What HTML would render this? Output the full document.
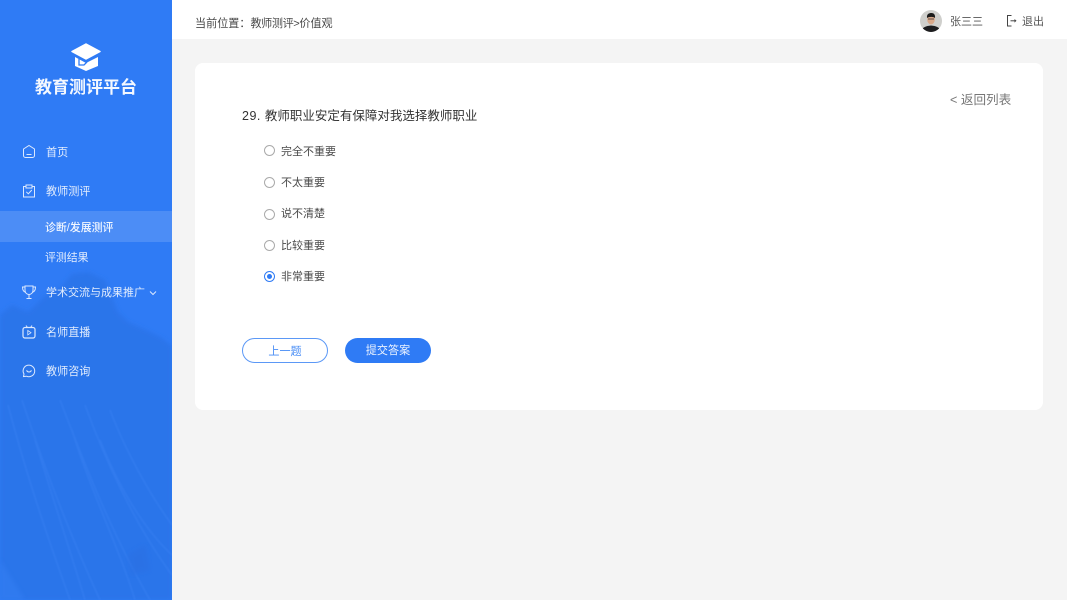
<!DOCTYPE html>
<html lang="zh"><head><meta charset="utf-8"><title>教育测评平台</title>
<style>
*{margin:0;padding:0;box-sizing:border-box}
html,body{width:1067px;height:600px;overflow:hidden;background:#f4f4f4;font-family:"Liberation Sans","Noto Sans CJK SC",sans-serif}
.a{position:absolute;white-space:nowrap;line-height:16px}
#side{position:absolute;left:0;top:0;width:172px;height:600px;background:#2f7bf5;overflow:hidden}
#side svg{position:absolute}
.m{color:#e3edfd;font-size:11.1px}
.o{color:#4a4a4a;font-size:11px;left:281px}
.r{position:absolute;left:264px;width:11px;height:11px;border:1px solid #aaa;border-radius:50%;background:#fff}
</style></head><body>
<div id="side">
<svg style="left:0;top:0" width="172" height="600" viewBox="0 0 172 600">
<defs><filter id="b" x="-10%" y="-10%" width="120%" height="120%"><feGaussianBlur stdDeviation="2"/></filter>
<filter id="s" x="-10%" y="-10%" width="120%" height="120%"><feGaussianBlur stdDeviation=".8"/></filter></defs>
<path d="M0 600V315L12 305 28 312 45 296 62 286 72 274 88 272 105 280 118 312 128 322 146 330 162 338 172 346V600Z" fill="#2c74ea" filter="url(#b)"/>
<g fill="none" stroke="#3a82f3" stroke-width="1.500" opacity=".5" filter="url(#s)">
<path d="M8 405C25 470 45 530 70 600M22 400C45 470 70 535 100 600M60 400C85 465 110 530 150 600M85 405C105 460 135 525 172 575M110 410C125 450 150 495 172 525"/>
<path d="M35 440C50 490 70 550 85 600M72 430C90 490 120 550 135 600M100 440C120 490 145 530 172 555"/>
</g>
<path d="M0 560L25 600H0Z" fill="#3580f4" opacity=".5" filter="url(#b)"/>
<path d="M128 555L145 545 150 570 132 575Z" fill="#2a6ee2" opacity=".5" filter="url(#b)"/>
<!-- logo -->
<path d="M86 44L100 51.500 86 59 72 51.500Z" fill="#fff" stroke="#fff" stroke-width="1.500" stroke-linejoin="round"/>
<path d="M75 57L86 63 98 57V66L86 71 75 66Z" fill="#fff"/>
<path d="M79 59V65H84L87 62" fill="none" stroke="#2f7bf5" stroke-width="1.300"/>
<!-- home -->
<path d="M23.500 149L29 145.500 34.500 149V155.500A2 2 0 0 1 32.500 157.500H25.500A2 2 0 0 1 23.500 155.500Z" fill="none" stroke="#dce9fe" stroke-width="1"/>
<path d="M26.500 154.500H31.500" stroke="#dce9fe" stroke-width="1"/>
<!-- clipboard -->
<path d="M26 186.500H23.500V197H34.500V186.500H32" fill="none" stroke="#dce9fe" stroke-width="1"/>
<path d="M26 185H32V188H26Z" fill="none" stroke="#dce9fe" stroke-width="1"/>
<path d="M26.300 191.800L28.300 193.800 31.800 190" fill="none" stroke="#dce9fe" stroke-width="1"/>
<!-- active row -->
<rect x="0" y="211" width="172" height="31" fill="#fff" opacity=".14"/>
<!-- trophy -->
<path d="M25 286H33V290.500A4 4 0 0 1 25 290.500Z" fill="none" stroke="#dce9fe" stroke-width="1"/>
<path d="M25 287H22.500C22.500 290 24 292 26 292.500M33 287H35.500C35.500 290 34 292 32 292.500M29 294.500V298.500M26.500 298.500H31.500" fill="none" stroke="#dce9fe" stroke-width="1"/>
<!-- chevron -->
<path d="M150 291.500L153 294.500 156 291.500" fill="none" stroke="#dce9fe" stroke-width="1"/>
<!-- tv -->
<rect x="23" y="327.500" width="12" height="10.500" rx="2" fill="none" stroke="#dce9fe" stroke-width="1.200"/>
<path d="M26 325.500L27.500 327.500M32 325.500L30.500 327.500" stroke="#dce9fe" stroke-width="1"/>
<path d="M27.800 330.500L31 332.700 27.800 334.900Z" fill="none" stroke="#dce9fe" stroke-width=".8"/>
<!-- chat -->
<path d="M23.500 376.500L24 374A5.800 5.800 0 1 1 26.500 376.200Z" fill="none" stroke="#dce9fe" stroke-width="1"/>
<path d="M26.600 370.300C27.300 372.500 30.700 372.500 31.400 370.300" fill="none" stroke="#dce9fe" stroke-width="1"/>
</svg>
<div class="a" style="left:35px;top:78px;line-height:20px;font-size:17px;font-weight:700;color:#f4f8ff">教育测评平台</div>
<div class="a m" style="left:46px;top:145px">首页</div>
<div class="a m" style="left:46px;top:184px">教师测评</div>
<div class="a" style="left:45px;top:220px;font-size:10.900px;color:#f2f7ff;font-weight:500">诊断/发展测评</div>
<div class="a m" style="left:45px;top:250px;font-size:10.900px">评测结果</div>
<div class="a m" style="left:46px;top:285px;font-size:11px">学术交流与成果推广</div>
<div class="a m" style="left:46px;top:325px">名师直播</div>
<div class="a m" style="left:46px;top:364px">教师咨询</div>
</div>

<div style="position:absolute;left:172px;top:0;width:895px;height:39px;background:#fff"></div>
<div class="a" style="left:195px;top:16px;font-size:11.100px;color:#4a4a4a">当前位置：<span style="letter-spacing:-.4px">教师测评&gt;</span>价值观</div>
<svg style="position:absolute;left:920px;top:10px" width="22" height="22" viewBox="0 0 22 22">
<defs><clipPath id="c"><circle cx="11" cy="11" r="11"/></clipPath></defs>
<g clip-path="url(#c)"><rect width="22" height="22" fill="#cfcfcc"/>
<path d="M1 22C2 17 6 16 11 15.500C16 16 20 17 21 22Z" fill="#1c1c1e"/>
<ellipse cx="11" cy="9.500" rx="3.800" ry="5" fill="#d9a98a"/>
<path d="M7 8C6.500 4 9 3 11.500 3C14 3 15.500 5 15 8C13.500 6.500 9 6.500 7 8Z" fill="#1b1b1b"/>
<path d="M8 9H14" stroke="#333" stroke-width=".8"/></g></svg>
<div class="a" style="left:950px;top:14px;font-size:11px;color:#555">张三三</div>
<svg style="position:absolute;left:1005px;top:14px" width="14" height="14" viewBox="0 0 14 14">
<path d="M6.500 1.500H2.500V12H6.500" fill="none" stroke="#444" stroke-width="1"/>
<path d="M5.500 6.800H10.500" stroke="#444" stroke-width="1"/><path d="M9.500 5L11.500 6.800 9.500 8.600Z" fill="#444"/></svg>
<div class="a" style="left:1022px;top:14px;font-size:11px;color:#555">退出</div>

<div style="position:absolute;left:195px;top:63px;width:848px;height:347px;background:#fff;border-radius:8px"></div>
<div class="a" style="left:950px;top:92px;font-size:12.600px;color:#777">&lt; 返回列表</div>
<div class="a" style="left:242px;top:108px;font-size:12.500px;color:#333"><span style="letter-spacing:.5px">29. </span>教师职业安定有保障对我选择教师职业</div>

<div class="r" style="top:145px"></div><div class="a o" style="top:144px">完全不重要</div>
<div class="r" style="top:177px"></div><div class="a o" style="top:175px">不太重要</div>
<div class="r" style="top:209px"></div><div class="a o" style="top:206px">说不清楚</div>
<div class="r" style="top:240px"></div><div class="a o" style="top:238px">比较重要</div>
<div class="r" style="top:271px;border-color:#2f7bf5"><div style="width:5px;height:5px;margin:2px;border-radius:50%;background:#2f7bf5"></div></div><div class="a o" style="top:269px">非常重要</div>

<div class="a" style="left:242px;top:338px;width:86px;height:25px;line-height:26px;border:1px solid #5b98f6;border-radius:13px;background:#fff;color:#4a8ef5;font-size:11.100px;text-align:center">上一题</div>
<div class="a" style="left:345px;top:338px;width:86px;height:25px;line-height:26px;border-radius:13px;background:#2f7bf5;color:#eaf2ff;font-size:11.100px;text-align:center">提交答案</div>
</body></html>
